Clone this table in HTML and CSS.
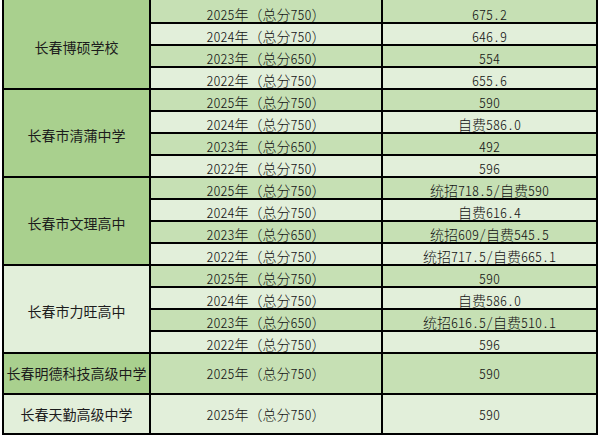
FILE: index.html
```html
<!DOCTYPE html>
<html lang="zh-CN">
<head>
<meta charset="utf-8">
<title>长春高中录取分数</title>
<link rel="stylesheet" href="styles.css">
</head>
<body>
<table class="scores">
  <colgroup>
    <col class="c-school">
    <col class="c-year">
    <col class="c-score">
  </colgroup>
  <tbody>
    <tr class="dark first"><td class="school school-dark" rowspan="4">长春博硕学校</td><td class="data">2025年<span class="fw">（</span>总分750<span class="fw">）</span></td><td class="data">675.2</td></tr>
    <tr class="light"><td class="data">2024年<span class="fw">（</span>总分750<span class="fw">）</span></td><td class="data">646.9</td></tr>
    <tr class="dark"><td class="data">2023年<span class="fw">（</span>总分650<span class="fw">）</span></td><td class="data">554</td></tr>
    <tr class="light"><td class="data">2022年<span class="fw">（</span>总分750<span class="fw">）</span></td><td class="data">655.6</td></tr>

    <tr class="dark"><td class="school school-dark" rowspan="4">长春市清蒲中学</td><td class="data">2025年<span class="fw">（</span>总分750<span class="fw">）</span></td><td class="data">590</td></tr>
    <tr class="light"><td class="data">2024年<span class="fw">（</span>总分750<span class="fw">）</span></td><td class="data">自费586.0</td></tr>
    <tr class="dark"><td class="data">2023年<span class="fw">（</span>总分650<span class="fw">）</span></td><td class="data">492</td></tr>
    <tr class="light"><td class="data">2022年<span class="fw">（</span>总分750<span class="fw">）</span></td><td class="data">596</td></tr>

    <tr class="dark"><td class="school school-dark" rowspan="4">长春市文理高中</td><td class="data">2025年<span class="fw">（</span>总分750<span class="fw">）</span></td><td class="data">统招718.5/自费590</td></tr>
    <tr class="light"><td class="data">2024年<span class="fw">（</span>总分750<span class="fw">）</span></td><td class="data">自费616.4</td></tr>
    <tr class="dark"><td class="data">2023年<span class="fw">（</span>总分650<span class="fw">）</span></td><td class="data">统招609/自费545.5</td></tr>
    <tr class="light"><td class="data">2022年<span class="fw">（</span>总分750<span class="fw">）</span></td><td class="data">统招717.5/自费665.1</td></tr>

    <tr class="dark"><td class="school school-light" rowspan="4">长春市力旺高中</td><td class="data">2025年<span class="fw">（</span>总分750<span class="fw">）</span></td><td class="data">590</td></tr>
    <tr class="light"><td class="data">2024年<span class="fw">（</span>总分750<span class="fw">）</span></td><td class="data">自费586.0</td></tr>
    <tr class="dark"><td class="data">2023年<span class="fw">（</span>总分650<span class="fw">）</span></td><td class="data">统招616.5/自费510.1</td></tr>
    <tr class="light"><td class="data">2022年<span class="fw">（</span>总分750<span class="fw">）</span></td><td class="data">596</td></tr>

    <tr class="dark tall tall-a"><td class="school school-dark">长春明德科技高级中学</td><td class="data">2025年<span class="fw">（</span>总分750<span class="fw">）</span></td><td class="data">590</td></tr>
    <tr class="light tall tall-b"><td class="school school-light">长春天勤高级中学</td><td class="data">2025年<span class="fw">（</span>总分750<span class="fw">）</span></td><td class="data">590</td></tr>
  </tbody>
</table>
</body>
</html>
```

FILE: styles.css
```css
html, body {
  margin: 0;
  padding: 0;
  background: #ffffff;
}

.scores {
  margin: -2px 0 0 2px;
  width: 596px;
  table-layout: fixed;
  border-collapse: separate;
  border-spacing: 2px;
  background: #000000;
  font-family: "Noto Sans CJK SC", sans-serif;
  font-size: 14px;
  color: #1c1c1c;
}

.c-school { width: 145px; }
.c-year { width: 230px; }
.c-score { width: 213px; }

.scores tr { height: 20px; }
.scores tr.first { height: 22px; }
.scores tr.tall-a { height: 39px; }
.scores tr.tall-b { height: 38px; }

.scores td {
  padding: 5px 0 0 0;
  line-height: 15px;
  text-align: center;
  vertical-align: middle;
  white-space: nowrap;
}

.scores tr.first td {
  padding-top: 7px;
}

.scores tr.tall-a td {
  padding-top: 0;
}

.scores tr.tall-b td {
  padding-top: 1px;
}

.scores td.data {
  font-weight: 300;
  color: #141414;
  font-feature-settings: "hwid" 1;
}

.scores td.data .fw {
  font-feature-settings: normal;
}

.dark td { background: #c6e0b4; }
.light td { background: #e2efda; }

.scores td.school-dark { background: #a9d08e; }
.scores td.school-light { background: #e2efda; }
```
